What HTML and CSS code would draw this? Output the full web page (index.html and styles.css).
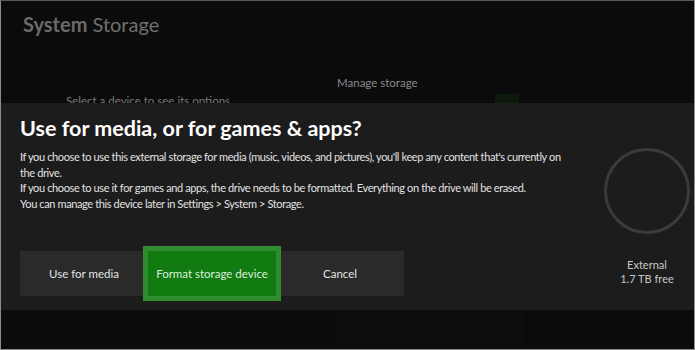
FILE: index.html
```html
<!DOCTYPE html>
<html lang="en">
<head>
    <meta charset="UTF-8">
    <title>System Storage</title>
    <link rel="stylesheet" href="styles.css">
</head>
<body>

<div class="screen">
    <div class="page-head">
        <h1 class="page-title"><strong>System</strong> Storage</h1>
        <div class="manage-row">
            <span class="manage-label">Manage storage</span>
            <span class="manage-tile"></span>
        </div>
        <p class="select-hint">Select a device to see its options</p>
    </div>

    <div class="dialog">
        <div class="dialog-main">
            <h2 class="dialog-title">Use for media, or for games &amp; apps?</h2>
            <p class="dialog-text">If you choose to use this external storage for media (music, videos, and pictures), you'll keep any content that's currently on the drive.</p>
            <p class="dialog-text">If you choose to use it for games and apps, the drive needs to be formatted. Everything on the drive will be erased.</p>
            <p class="dialog-text">You can manage this device later in Settings &gt; System &gt; Storage.</p>
            <div class="button-row">
                <button class="dlg-button">Use for media</button>
                <button class="dlg-button focused">Format storage device</button>
                <button class="dlg-button">Cancel</button>
            </div>
        </div>
        <div class="device">
            <svg class="device-ring" width="90" height="90" viewBox="0 0 90 90">
                <circle cx="45" cy="45" r="41.5" fill="none" stroke="#3b3b3b" stroke-width="3"/>
            </svg>
            <div class="device-name">External</div>
            <div class="device-free">1.7 TB free</div>
        </div>
    </div>

    <div class="page-foot">
        <span class="foot-tile"></span>
    </div>
</div>

</body>
</html>
```

FILE: styles.css
```css
    body {
        margin: 0;
        padding: 0;
        background-color: #0b0b0b;
        font-family: 'Lato', 'Noto Sans', sans-serif;
    }
    .screen {
        width: 695px;
        height: 350px;
        box-sizing: border-box;
        border: 1px solid #8c8c8c;
        border-top-color: #5a5a5a;
        display: flex;
        flex-direction: column;
        background-color: #0b0b0b;
        overflow: hidden;
    }
    .page-head {
        height: 102px;
        overflow: hidden;
        padding-left: 22px;
    }
    .page-title {
        margin: 10px 0 0 0;
        font-size: 20px;
        line-height: 26px;
        font-weight: normal;
        color: #707070;
    }
    .page-title strong {
        font-weight: bold;
        color: #6a6a6a;
    }
    .manage-row {
        display: flex;
        align-items: flex-end;
        margin-top: 34px;
        padding-left: 314px;
        height: 18px;
    }
    .manage-label {
        font-size: 11.5px;
        color: #8a8a8a;
    }
    .manage-tile {
        width: 24px;
        height: 9px;
        margin-left: 77px;
        margin-bottom: -14px;
        background-color: #0d190d;
    }
    .select-hint {
        margin: 5px 0 0 43px;
        font-size: 11.5px;
        color: #7a7a7a;
    }
    .dialog {
        height: 207px;
        background-color: #1c1c1c;
        display: flex;
    }
    .dialog-main {
        flex: 1;
        padding: 12px 0 0 19px;
    }
    .dialog-title {
        margin: 0 0 8px 0;
        font-size: 21.5px;
        line-height: 26px;
        font-weight: bold;
        color: #ffffff;
    }
    .dialog-text {
        margin: 0;
        width: 552px;
        font-size: 11px;
        letter-spacing: -0.38px;
        line-height: 15.5px;
        color: #e2e2e2;
    }
    .button-row {
        display: flex;
        margin-top: 40px;
    }
    .dlg-button {
        width: 128px;
        height: 45px;
        border: none;
        background-color: #2a2a2a;
        color: #e4e4e4;
        font-family: 'Lato', 'Noto Sans', sans-serif;
        font-size: 11.5px;
        padding: 0;
    }
    .dlg-button.focused {
        background-color: #117a11;
        color: #dcefdc;
        outline: 5px solid #2f8c2f;
        position: relative;
    }
    .device {
        width: 94px;
        display: flex;
        flex-direction: column;
        align-items: center;
        padding-top: 43px;
    }
    .device-ring {
        display: block;
        margin-left: -1px;
    }
    .device-name {
        margin-top: 22px;
        font-size: 11px;
        line-height: 14px;
        color: #c8c8c8;
    }
    .device-free {
        font-size: 11px;
        line-height: 14px;
        color: #c8c8c8;
    }
    .page-foot {
        flex: 1;
        padding-left: 337px;
    }
    .foot-tile {
        display: block;
        width: 185px;
        height: 100%;
        background-color: #0d0d0d;
    }
```
